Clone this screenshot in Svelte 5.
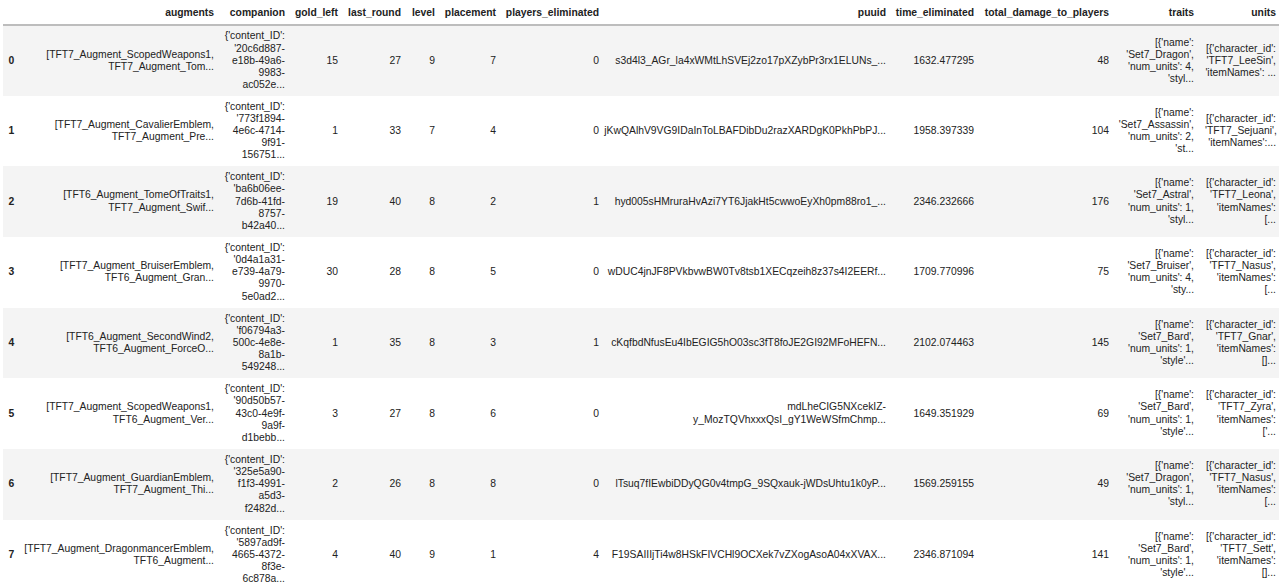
<script lang="ts">
	const columns = [
		'augments',
		'companion',
		'gold_left',
		'last_round',
		'level',
		'placement',
		'players_eliminated',
		'puuid',
		'time_eliminated',
		'total_damage_to_players',
		'traits',
		'units'
	];

	const rows = [
		[
			'[TFT7_Augment_ScopedWeapons1, TFT7_Augment_Tom...',
			"{'content_ID': '20c6d887-e18b-49a6-9983-ac052e...",
			15, 27, 9, 7, 0,
			's3d4l3_AGr_la4xWMtLhSVEj2zo17pXZybPr3rx1ELUNs_...',
			'1632.477295', 48,
			"[{'name': 'Set7_Dragon', 'num_units': 4, 'styl...",
			"[{'character_id': 'TFT7_LeeSin', 'itemNames': ..."
		],
		[
			'[TFT7_Augment_CavalierEmblem, TFT7_Augment_Pre...',
			"{'content_ID': '773f1894-4e6c-4714-9f91-156751...",
			1, 33, 7, 4, 0,
			'jKwQAlhV9VG9IDaInToLBAFDibDu2razXARDgK0PkhPbPJ...',
			'1958.397339', 104,
			"[{'name': 'Set7_Assassin', 'num_units': 2, 'st...",
			"[{'character_id': 'TFT7_Sejuani', 'itemNames':..."
		],
		[
			'[TFT6_Augment_TomeOfTraits1, TFT7_Augment_Swif...',
			"{'content_ID': 'ba6b06ee-7d6b-41fd-8757-b42a40...",
			19, 40, 8, 2, 1,
			'hyd005sHMruraHvAzi7YT6JjakHt5cwwoEyXh0pm88ro1_...',
			'2346.232666', 176,
			"[{'name': 'Set7_Astral', 'num_units': 1, 'styl...",
			"[{'character_id': 'TFT7_Leona', 'itemNames': [..."
		],
		[
			'[TFT7_Augment_BruiserEmblem, TFT6_Augment_Gran...',
			"{'content_ID': '0d4a1a31-e739-4a79-9970-5e0ad2...",
			30, 28, 8, 5, 0,
			'wDUC4jnJF8PVkbvwBW0Tv8tsb1XECqzeih8z37s4I2EERf...',
			'1709.770996', 75,
			"[{'name': 'Set7_Bruiser', 'num_units': 4, 'sty...",
			"[{'character_id': 'TFT7_Nasus', 'itemNames': [..."
		],
		[
			'[TFT6_Augment_SecondWind2, TFT6_Augment_ForceO...',
			"{'content_ID': 'f06794a3-500c-4e8e-8a1b-549248...",
			1, 35, 8, 3, 1,
			'cKqfbdNfusEu4IbEGIG5hO03sc3fT8foJE2GI92MFoHEFN...',
			'2102.074463', 145,
			"[{'name': 'Set7_Bard', 'num_units': 1, 'style'...",
			"[{'character_id': 'TFT7_Gnar', 'itemNames': []..."
		],
		[
			'[TFT7_Augment_ScopedWeapons1, TFT6_Augment_Ver...',
			"{'content_ID': '90d50b57-43c0-4e9f-9a9f-d1bebb...",
			3, 27, 8, 6, 0,
			'mdLheCIG5NXcekIZ-y_MozTQVhxxxQsI_gY1WeWSfmChmp...',
			'1649.351929', 69,
			"[{'name': 'Set7_Bard', 'num_units': 1, 'style'...",
			"[{'character_id': 'TFT7_Zyra', 'itemNames': ['..."
		],
		[
			'[TFT7_Augment_GuardianEmblem, TFT7_Augment_Thi...',
			"{'content_ID': '325e5a90-f1f3-4991-a5d3-f2482d...",
			2, 26, 8, 8, 0,
			'lTsuq7fIEwbiDDyQG0v4tmpG_9SQxauk-jWDsUhtu1k0yP...',
			'1569.259155', 49,
			"[{'name': 'Set7_Dragon', 'num_units': 1, 'styl...",
			"[{'character_id': 'TFT7_Nasus', 'itemNames': [..."
		],
		[
			'[TFT7_Augment_DragonmancerEmblem, TFT6_Augment...',
			"{'content_ID': '5897ad9f-4665-4372-8f3e-6c878a...",
			4, 40, 9, 1, 4,
			'F19SAIIIjTi4w8HSkFIVCHl9OCXek7vZXogAsoA04xXVAX...',
			'2346.871094', 141,
			"[{'name': 'Set7_Bard', 'num_units': 1, 'style'...",
			"[{'character_id': 'TFT7_Sett', 'itemNames': []..."
		]
	];
</script>

<table>
	<colgroup>
		<col class="c-index" />
		<col class="c-augments" />
		<col class="c-companion" />
		<col class="c-gold" />
		<col class="c-round" />
		<col class="c-level" />
		<col class="c-placement" />
		<col class="c-elim" />
		<col class="c-puuid" />
		<col class="c-time" />
		<col class="c-damage" />
		<col class="c-traits" />
		<col class="c-units" />
	</colgroup>
	<thead>
		<tr>
			<th></th>
			{#each columns as col}
				<th>{col}</th>
			{/each}
		</tr>
	</thead>
	<tbody>
		{#each rows as row, i}
			<tr>
				<th class="index">{i}</th>
				{#each row as cell}
					<td>{cell}</td>
				{/each}
			</tr>
		{/each}
	</tbody>
</table>

<style>
	:global(html),
	:global(body) {
		overflow: hidden;
		background: #fff;
	}

	table {
		table-layout: fixed;
		width: 1276px;
		margin-left: 3px;
		border-collapse: collapse;
		border-spacing: 0;
		font-family: 'Liberation Sans', Arial, sans-serif;
		font-size: 10.35px;
		line-height: 12.15px;
		color: #222;
	}

	.c-index { width: 17px; }
	.c-augments { width: 197px; }
	.c-companion { width: 71px; }
	.c-gold { width: 53px; }
	.c-round { width: 63px; }
	.c-level { width: 34px; }
	.c-placement { width: 61px; }
	.c-elim { width: 103px; }
	.c-puuid { width: 287px; }
	.c-time { width: 88px; }
	.c-damage { width: 135px; }
	.c-traits { width: 85px; }
	.c-units { width: 82px; }

	thead tr {
		height: 25px;
		border-bottom: 2px solid #bdbdbd;
	}

	thead th {
		padding-top: 2px;
	}

	tbody tr {
		height: 70.67px;
	}

	tbody tr:nth-child(odd) {
		background: #f4f4f4;
	}

	th,
	td {
		padding: 0 3px 0 4px;
		text-align: right;
		vertical-align: middle;
	}

	/* puuid runs almost the full column, units wraps early */
	td:nth-child(9) {
		padding-left: 1px;
	}

	td:nth-child(13) {
		padding-left: 8px;
	}

	th {
		font-weight: bold;
		white-space: nowrap;
	}

	th.index {
		padding: 0;
		text-align: center;
	}
</style>
